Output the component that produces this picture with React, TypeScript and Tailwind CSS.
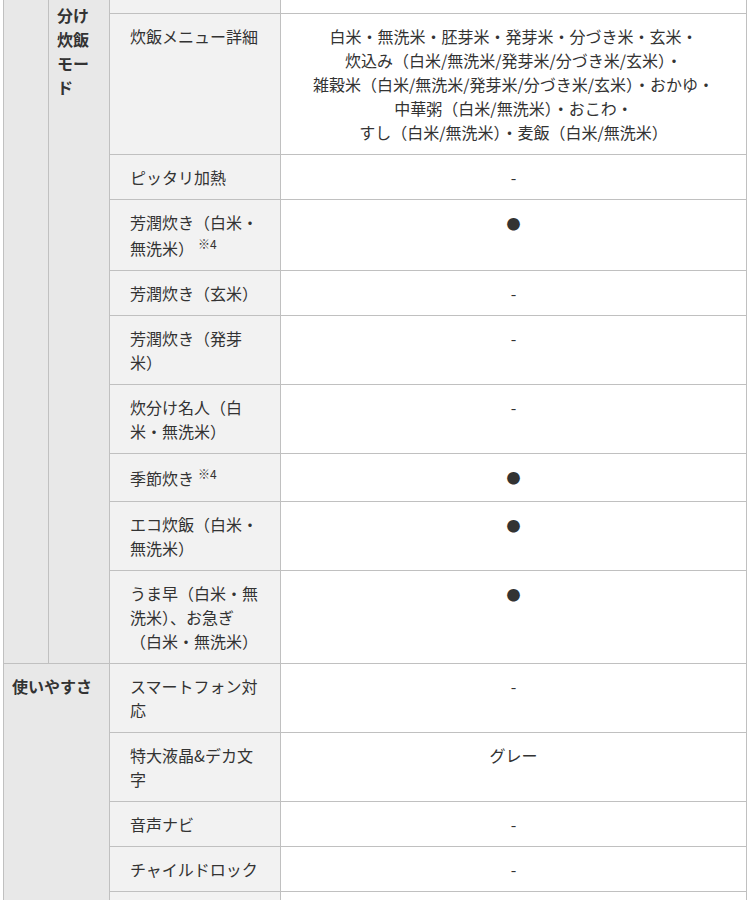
import React from 'react';

type Row = {
  label: React.ReactNode;
  value: React.ReactNode;
};

const Dot = () => <span className="text-[14px]">●</span>;

const Note = () => (
  <sup className="static ml-[4px] align-super text-[12px] leading-[19px]">※4</sup>
);

const cookRows: Row[] = [
  {
    label: '炊飯メニュー詳細',
    value: (
      <>
        白米・無洗米・胚芽米・発芽米・分づき米・玄米・
        <br />
        炊込み（白米/無洗米/発芽米/分づき米/玄米）・
        <br />
        雑穀米（白米/無洗米/発芽米/分づき米/玄米）・おかゆ・
        <br />
        中華粥（白米/無洗米）・おこわ・
        <br />
        すし（白米/無洗米）・麦飯（白米/無洗米）
      </>
    ),
  },
  { label: 'ピッタリ加熱', value: '-' },
  {
    label: (
      <>
        芳潤炊き（白米・無洗米）
        <Note />
      </>
    ),
    value: <Dot />,
  },
  { label: '芳潤炊き（玄米）', value: '-' },
  { label: '芳潤炊き（発芽米）', value: '-' },
  { label: '炊分け名人（白米・無洗米）', value: '-' },
  {
    label: (
      <>
        季節炊き
        <Note />
      </>
    ),
    value: <Dot />,
  },
  { label: 'エコ炊飯（白米・無洗米）', value: <Dot /> },
  { label: 'うま早（白米・無洗米）、お急ぎ（白米・無洗米）', value: <Dot /> },
];

const easeRows: Row[] = [
  { label: 'スマートフォン対応', value: '-' },
  { label: '特大液晶&デカ文字', value: 'グレー' },
  { label: '音声ナビ', value: '-' },
  { label: 'チャイルドロック', value: '-' },
  { label: 'お手入れ簡単', value: '-' },
];

const th = 'border border-[#c0c0c0] align-top text-left';
const labelCell = `${th} bg-[#f2f2f2] font-normal px-5 py-[10px]`;
const valueCell = 'border border-[#c0c0c0] align-top text-center bg-white px-5 py-[10px]';

export default function App() {
  return (
    <div className="h-[900px] overflow-hidden bg-white px-[3px] font-['Noto_Sans_CJK_JP',sans-serif] text-[16px] leading-6 text-[#333]">
      <table className="-mt-[32px] w-[744px] table-fixed border-collapse">
        <colgroup>
          <col className="w-[45px]" />
          <col className="w-[61px]" />
          <col className="w-[171px]" />
          <col />
        </colgroup>
        <tbody>
          <tr>
            <th rowSpan={cookRows.length + 1} className={`${th} bg-[#e8e8e8]`} />
            <th rowSpan={cookRows.length + 1} className={`${th} bg-[#e8e8e8] px-2 py-[10px] font-bold`}>
              炊き分け炊飯モード
            </th>
            <th className={labelCell}>炊飯量</th>
            <td className={valueCell}>-</td>
          </tr>
          {cookRows.map((r, i) => (
            <tr key={i}>
              <th className={labelCell}>{r.label}</th>
              <td className={valueCell}>{r.value}</td>
            </tr>
          ))}
          {easeRows.map((r, i) => (
            <tr key={`e${i}`}>
              {i === 0 && (
                <th
                  colSpan={2}
                  rowSpan={easeRows.length}
                  className={`${th} bg-[#e8e8e8] px-2 py-[10px] font-bold`}
                >
                  使いやすさ
                </th>
              )}
              <th className={labelCell}>{r.label}</th>
              <td className={valueCell}>{r.value}</td>
            </tr>
          ))}
        </tbody>
      </table>
    </div>
  );
}
